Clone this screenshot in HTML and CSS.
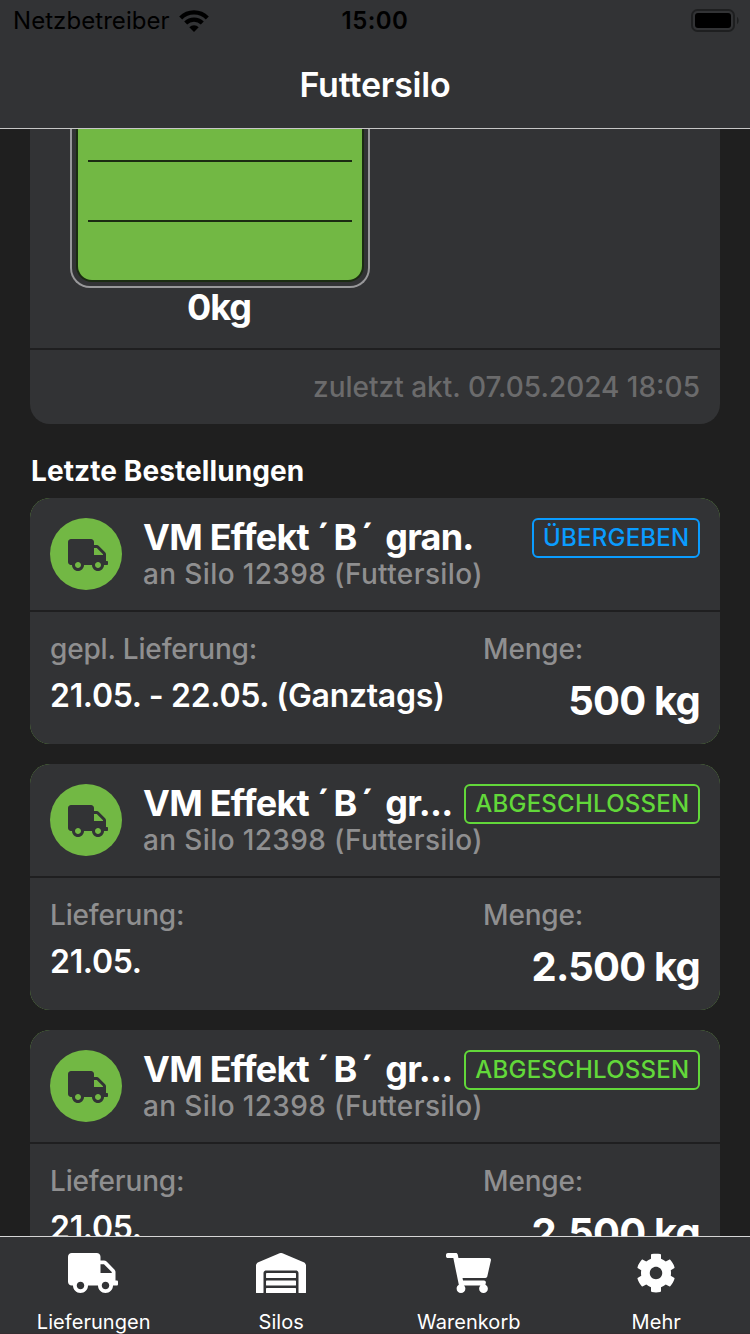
FILE: index.html
```
<!DOCTYPE html>
<html lang="de">
<head>
<meta charset="utf-8">
<title>Futtersilo</title>
<link rel="stylesheet" href="styles.css">
</head>
<body>
<svg class="sprite" aria-hidden="true">
  <symbol id="truck" viewBox="0 0 640 512"><path d="M624 352h-16V243.900c0-12.700-5.100-24.900-14.100-33.900L494 110.100c-9-9-21.200-14.100-33.900-14.100H416V48c0-26.500-21.500-48-48-48H48C21.500 0 0 21.500 0 48v320c0 26.500 21.500 48 48 48h16c0 53 43 96 96 96s96-43 96-96h128c0 53 43 96 96 96s96-43 96-96h48c8.800 0 16-7.200 16-16v-32c0-8.800-7.200-16-16-16zM160 464c-26.500 0-48-21.500-48-48s21.500-48 48-48 48 21.500 48 48-21.500 48-48 48zm320 0c-26.500 0-48-21.500-48-48s21.500-48 48-48 48 21.500 48 48-21.500 48-48 48zm80-208H416V144h44.100l99.900 99.900V256z"/></symbol>
</svg>
<div class="screen">
  <header class="navbar">
    <div class="status">
      <div class="carrier">
        <span>Netzbetreiber</span>
        <svg class="wifi" viewBox="0 0 30 22"><g fill="none" stroke="#000" stroke-width="4.200"><path d="M1.700 8A18.600 18.600 0 0 1 28.300 8"/><path d="M6.700 13.100A11.700 11.700 0 0 1 23.300 13.100"/></g><path d="M15 22l-4.700-4.800a6.600 6.600 0 0 1 9.400 0z"/></svg>
      </div>
      <span class="clock">15:00</span>
      <svg class="battery" viewBox="0 0 48 23"><rect x="1" y="1" width="42" height="21" rx="5.500" fill="none" stroke="#1e1f20" stroke-width="2"/><rect x="4" y="4" width="36" height="15" rx="3" /><path d="M46 8c2.200 1 2.200 6 0 7z" fill="#1e1f20"/></svg>
    </div>
    <h1 class="title">Futtersilo</h1>
  </header>

  <main class="content">
    <section class="silo-card">
      <div class="silo-body">
        <div class="silo">
          <div class="fill"><i class="mark"></i><i class="mark"></i></div>
        </div>
        <div class="level">0kg</div>
      </div>
      <div class="updated">zuletzt akt. 07.05.2024 18:05</div>
    </section>

    <h2 class="section-title">Letzte Bestellungen</h2>

    <div class="orders">
      <article class="order">
        <div class="order-head">
          <div class="avatar"><svg><use href="#truck"/></svg></div>
          <div class="order-text">
            <div class="order-top"><h3 class="product">VM Effekt <span class="grade">´B´</span> gran.</h3><span class="badge handed">ÜBERGEBEN</span></div>
            <p class="target">an Silo 12398 (Futtersilo)</p>
          </div>
        </div>
        <div class="order-body">
          <div class="delivery"><div class="label">gepl. Lieferung:</div><div class="date">21.05. - 22.05. (Ganztags)</div></div>
          <div class="amount"><div class="label">Menge:</div><div class="quantity">500 kg</div></div>
        </div>
      </article>
      <article class="order">
        <div class="order-head">
          <div class="avatar"><svg><use href="#truck"/></svg></div>
          <div class="order-text">
            <div class="order-top"><h3 class="product">VM Effekt <span class="grade">´B´</span> gr...</h3><span class="badge done">ABGESCHLOSSEN</span></div>
            <p class="target">an Silo 12398 (Futtersilo)</p>
          </div>
        </div>
        <div class="order-body">
          <div class="delivery"><div class="label">Lieferung:</div><div class="date">21.05.</div></div>
          <div class="amount"><div class="label">Menge:</div><div class="quantity">2.500 kg</div></div>
        </div>
      </article>
      <article class="order">
        <div class="order-head">
          <div class="avatar"><svg><use href="#truck"/></svg></div>
          <div class="order-text">
            <div class="order-top"><h3 class="product">VM Effekt <span class="grade">´B´</span> gr...</h3><span class="badge done">ABGESCHLOSSEN</span></div>
            <p class="target">an Silo 12398 (Futtersilo)</p>
          </div>
        </div>
        <div class="order-body">
          <div class="delivery"><div class="label">Lieferung:</div><div class="date">21.05.</div></div>
          <div class="amount"><div class="label">Menge:</div><div class="quantity">2.500 kg</div></div>
        </div>
      </article>
    </div>
  </main>

  <nav class="tabbar">
    <a class="tab"><svg class="tab-truck" width="50"><use href="#truck"/></svg><span>Lieferungen</span></a>
    <a class="tab"><svg viewBox="0 0 640 512" width="50"><path d="M504 352H136.400c-4.400 0-8 3.600-8 8l-.1 48c0 4.400 3.600 8 8 8H504c4.400 0 8-3.600 8-8v-48c0-4.400-3.600-8-8-8zm0 96H136.100c-4.400 0-8 3.600-8 8l-.1 48c0 4.400 3.600 8 8 8h368c4.400 0 8-3.600 8-8v-48c0-4.400-3.600-8-8-8zm0-192H136.600c-4.400 0-8 3.600-8 8l-.1 48c0 4.400 3.600 8 8 8H504c4.400 0 8-3.600 8-8v-48c0-4.400-3.600-8-8-8zm106.500-139L338.400 3.700a48.150 48.150 0 0 0-36.900 0L29.500 117C11.700 124.500 0 141.900 0 161.300V504c0 4.400 3.600 8 8 8h80c4.400 0 8-3.600 8-8V256c0-17.600 14.600-32 32.600-32h382.800c18 0 32.600 14.400 32.600 32v248c0 4.400 3.600 8 8 8h80c4.400 0 8-3.600 8-8V161.300c0-19.400-11.700-36.800-29.500-44.300z"/></svg><span>Silos</span></a>
    <a class="tab"><svg viewBox="0 0 576 512" width="45"><path d="M528.120 301.319l47.273-208C578.806 78.301 567.391 64 551.990 64H159.208l-9.166-44.810C147.758 8.021 137.930 0 126.529 0H24C10.745 0 0 10.745 0 24v16c0 13.255 10.745 24 24 24h69.883l70.248 343.435C147.325 417.100 136 435.222 136 456c0 30.928 25.072 56 56 56s56-25.072 56-56c0-15.674-6.447-29.835-16.824-40h209.647C430.447 426.165 424 440.326 424 456c0 30.928 25.072 56 56 56s56-25.072 56-56c0-22.172-12.888-41.332-31.579-50.405l5.517-24.276c3.413-15.018-8.002-29.319-23.403-29.319H218.117l-6.545-32h293.145c11.206 0 20.920-7.754 23.403-18.681z"/></svg><span>Warenkorb</span></a>
    <a class="tab"><svg viewBox="0 0 512 512" width="40"><path d="M487.400 315.700l-42.600-24.600c4.300-23.200 4.300-47 0-70.200l42.600-24.600c4.900-2.800 7.100-8.600 5.500-14-11.100-35.600-30-67.800-54.700-94.600-3.800-4.100-10-5.100-14.800-2.300L380.800 110c-17.900-15.400-38.500-27.300-60.800-35.100V25.800c0-5.600-3.900-10.500-9.400-11.700-36.700-8.200-74.300-7.800-109.200 0-5.500 1.200-9.400 6.100-9.400 11.700V75c-22.200 7.900-42.800 19.800-60.800 35.100L88.700 85.500c-4.900-2.800-11-1.900-14.800 2.300-24.700 26.700-43.600 58.900-54.700 94.600-1.700 5.400.6 11.200 5.500 14L67.300 221c-4.300 23.200-4.300 47 0 70.200l-42.600 24.600c-4.900 2.800-7.100 8.600-5.500 14 11.100 35.600 30 67.800 54.700 94.600 3.800 4.100 10 5.100 14.800 2.300l42.600-24.600c17.900 15.400 38.500 27.300 60.800 35.100v49.200c0 5.600 3.900 10.500 9.400 11.700 36.700 8.200 74.300 7.800 109.200 0 5.500-1.200 9.400-6.100 9.400-11.700v-49.200c22.200-7.900 42.800-19.800 60.800-35.100l42.600 24.600c4.900 2.800 11 1.900 14.800-2.300 24.700-26.700 43.600-58.900 54.700-94.600 1.500-5.500-.7-11.300-5.600-14.100zM256 336c-44.100 0-80-35.900-80-80s35.900-80 80-80 80 35.900 80 80-35.900 80-80 80z"/></svg><span>Mehr</span></a>
  </nav>
</div>
</body>
</html>
```
FILE: styles.css
```
* { box-sizing: border-box; }
body { margin: 0; background: #1f1f1f; font-family: Inter, "Noto Sans", sans-serif; color: #fff; }
h1, h2, h3, p { margin: 0; }
.sprite { display: none; }
.screen { display: flex; flex-direction: column; width: 750px; height: 1334px; overflow: hidden; }

.navbar { flex: none; height: 129px; background: #323335; border-bottom: 1px solid #c6c6c6; }
.status { display: grid; grid-template-columns: 1fr auto 1fr; align-items: center; height: 40px; padding: 0 11px 0 13px; color: #000; font-size: 24px; line-height: 42px; }
.carrier { display: flex; align-items: center; gap: 9px; letter-spacing: .06px; }
.wifi { width: 30px; height: 22px; margin-top: -1px; }
.clock { margin-right: 2px; font-weight: 600; letter-spacing: .45px; }
.battery { justify-self: end; width: 48px; height: 23px; margin-top: -1px; }
.title { height: 88px; font-size: 34px; line-height: 89px; font-weight: 600; letter-spacing: -.2px; text-align: center; }

.content { flex: 1; min-height: 0; overflow: hidden; padding: 0 30px; }
.silo-card { background: #323335; border-radius: 0 0 20px 20px; }
.silo-body { width: 380px; height: 219px; padding-left: 40px; }
.silo { width: 300px; height: 159px; padding: 0 4px 4px; border: 2px solid #98989a; border-top: 0; border-radius: 0 0 20px 20px; }
.fill { display: flex; flex-direction: column; gap: 58px; height: 153px; padding: 31px 10px 0; background: #72b844; border: 2px solid #1b2c12; border-top: 0; border-radius: 0 0 16px 16px; }
.mark { height: 2px; background: #1b2c12; }
.level { width: 298px; font-size: 36px; line-height: 39px; font-weight: 700; letter-spacing: -1px; text-align: center; }
.updated { height: 76px; padding-right: 20px; border-top: 2px solid #1f1f20; color: #6b6b6c; font-size: 28px; line-height: 74px; font-weight: 500; text-align: right; }
.section-title { padding: 28px 0 8px 1px; font-size: 28px; line-height: 38px; font-weight: 700; letter-spacing: .1px; }

.orders { display: flex; flex-direction: column; gap: 20px; }
.order { height: 246px; background: #72b844; border-radius: 20px; }
.order-head { display: flex; gap: 20px; height: 112px; padding: 20px; background: #323335; border-radius: 20px 20px 0 0; }
.avatar { flex: none; width: 72px; height: 72px; padding: 21px 0 0 18px; border-radius: 50%; background: #72b844; }
.avatar svg { display: block; width: 40px; height: 32px; fill: #323335; }
.order-text { flex: 1; min-width: 0; padding-left: 1px; }
.order-top { display: flex; justify-content: space-between; height: 39px; }
.product { flex: none; height: 45px; margin-top: -3px; white-space: nowrap; font-size: 36px; line-height: 45px; font-weight: 700; letter-spacing: -.75px; }
.grade { letter-spacing: 3.500px; }
.target { color: #8f8f90; font-size: 28px; line-height: 34px; font-weight: 500; letter-spacing: .37px; }
.badge { flex: none; height: 40px; padding: 0 8.500px 0 9px; border: 2px solid; border-radius: 6px; font-size: 24px; line-height: 36px; font-weight: 500; letter-spacing: .25px; }
.handed { color: #0a9cff; }
.done { color: #62d83a; }
.order-body { display: grid; grid-template-columns: 433px 217px; height: 134px; padding: 20px; background: #323335; border-top: 2px solid #1f1f20; border-radius: 0 0 20px 20px; }
.label { margin-bottom: 10px; color: #8f8f90; font-size: 28px; line-height: 35px; font-weight: 500; letter-spacing: -.17px; }
.date { font-size: 32px; line-height: 38px; font-weight: 600; letter-spacing: -.3px; }
.quantity { font-size: 40px; line-height: 48px; font-weight: 700; letter-spacing: -.8px; text-align: right; }

.tabbar { display: grid; flex: none; grid-template-columns: repeat(4, 1fr); height: 98px; background: #323335; border-top: 1px solid #d6d6d6; border-bottom: 1px solid #342d30; }
.tab { display: flex; flex-direction: column; align-items: center; gap: 17px; padding-top: 16px; font-size: 20px; line-height: 24px; letter-spacing: .05px; }
.tab svg { height: 40px; fill: #fff; }
.tab .tab-truck { margin-right: 1.500px; }
```
